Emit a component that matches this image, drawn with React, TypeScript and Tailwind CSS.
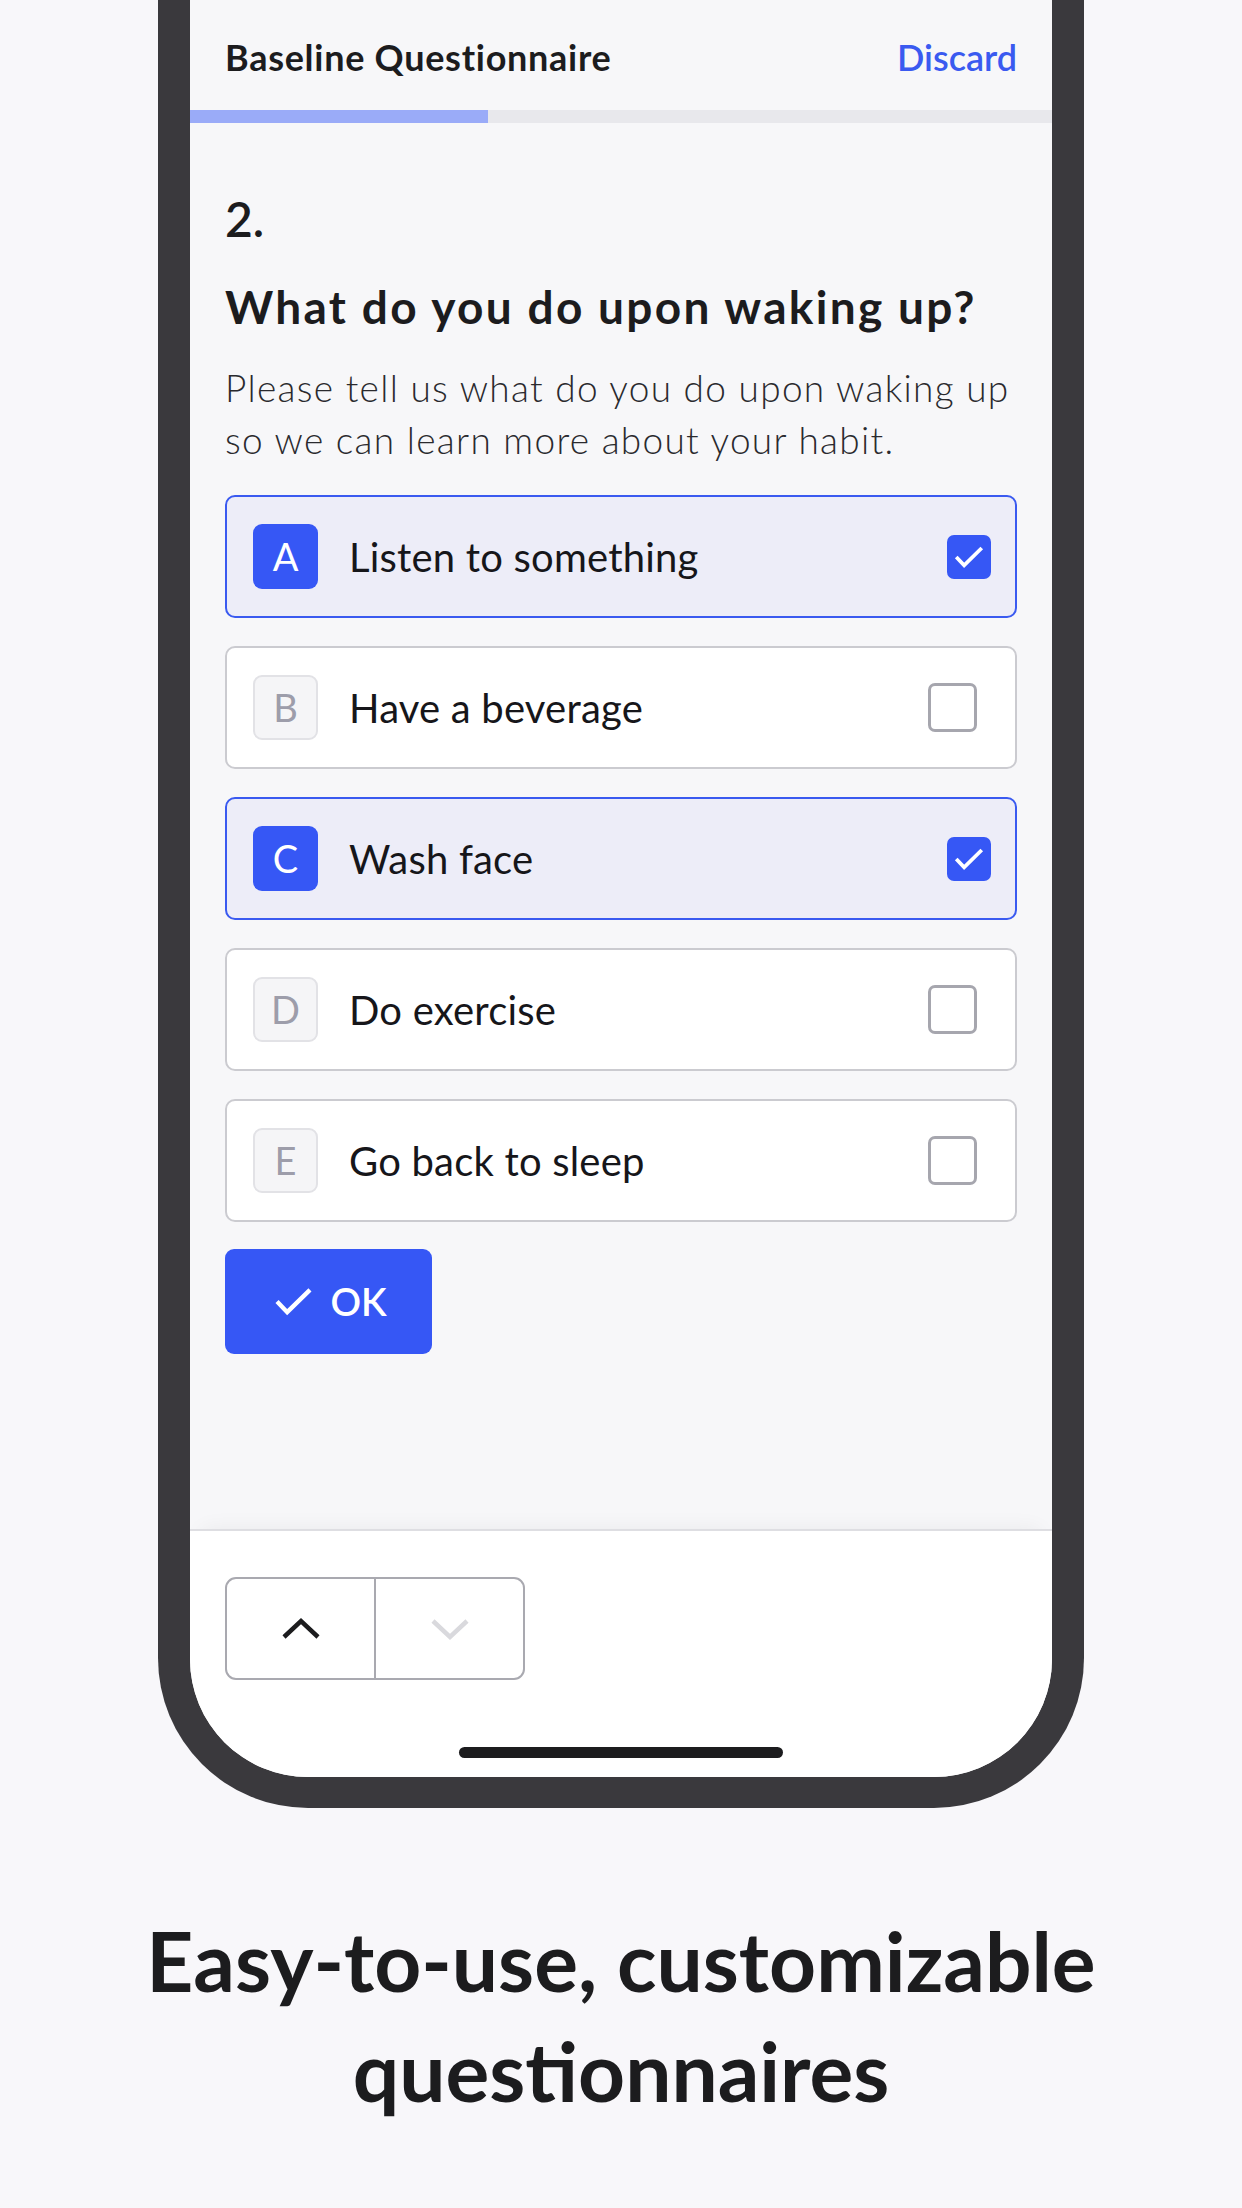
import React from "react";

const options = [
  { key: "A", label: "Listen to something", on: true },
  { key: "B", label: "Have a beverage", on: false },
  { key: "C", label: "Wash face", on: true },
  { key: "D", label: "Do exercise", on: false },
  { key: "E", label: "Go back to sleep", on: false },
];

function CheckIcon({ className, width = 4 }: { className?: string; width?: number }) {
  return (
    <svg viewBox="0 0 40 32" fill="none" stroke="currentColor" strokeWidth={width} className={className}>
      <path d="M3 16l10.5 11L37 4" />
    </svg>
  );
}

function Chevron({ up, className }: { up?: boolean; className?: string }) {
  return (
    <svg viewBox="0 0 40 24" fill="none" stroke="currentColor" strokeWidth={4.5} className={className}>
      {up ? <path d="M3 20L20 4l17 16" /> : <path d="M3 4l17 16L37 4" />}
    </svg>
  );
}

function OptionRow({ k, label, on }: { k: string; label: string; on: boolean }) {
  return (
    <div
      className={`flex h-[123px] items-center rounded-[10px] pl-[26px] pr-[24px] ${
        on ? "border-2 border-[#3a5af0] bg-[#ededf8]" : "border-2 border-[#cbcbd0] bg-white"
      }`}
    >
      <div
        className={`flex h-[65px] w-[65px] shrink-0 items-center justify-center rounded-[9px] text-[38px] ${
          on ? "bg-[#3657f5] text-white" : "border-2 border-[#e2e2e6] bg-[#f5f5f7] text-[#9d9daa]"
        }`}
      >
        {k}
      </div>
      <span className="ml-[31px] flex-1 text-[40px] tracking-[0.005em] text-[#16161a]">{label}</span>
      {on ? (
        <div className="flex h-[44px] w-[44px] items-center justify-center rounded-[7px] bg-[#3657f5] text-white">
          <CheckIcon className="h-[24px] w-[30px]" width={5} />
        </div>
      ) : (
        <div className="mr-[14px] h-[49px] w-[49px] rounded-[7px] border-[3px] border-[#a6a6ae] bg-white" />
      )}
    </div>
  );
}

export default function App() {
  return (
    <div className="flex h-[2208px] w-[1242px] flex-col items-center overflow-hidden bg-[#f8f7fa] font-['Lato',sans-serif]">
      <div className="h-[1808px] w-[926px] shrink-0 rounded-b-[150px] bg-[#3a393d] px-[32px] pb-[31px]">
        <div className="flex h-full flex-col overflow-hidden rounded-b-[118px] bg-[#f7f7f9]">
          <header className="flex h-[110px] shrink-0 items-center justify-between px-[35px] pt-[4px]">
            <span className="text-[36px] font-bold tracking-[0.02em] text-[#1c1c1e]">Baseline Questionnaire</span>
            <span className="text-[36px] font-semibold text-[#3a5af0]">Discard</span>
          </header>
          <div className="flex h-[13px] shrink-0 bg-[#e8e8ec]">
            <div className="w-[298px] bg-[#9aabf8]" />
          </div>

          <main className="flex flex-1 flex-col px-[35px] pt-[68px]">
            <p className="text-[48px] font-semibold leading-[56px] text-[#1c1c1e]">2.</p>
            <h1 className="mt-[34px] text-[46px] font-bold leading-[52px] tracking-[0.05em] text-[#1c1c1e]">
              What do you do upon waking up?
            </h1>
            <p className="mt-[29px] text-[37px] font-light leading-[52px] tracking-[0.035em] text-[#2a2a2e]">
              Please tell us what do you do upon waking up so we can learn more about your habit.
            </p>
            <div className="mt-[29px] flex flex-col gap-[28px]">
              {options.map((o) => (
                <OptionRow key={o.key} k={o.key} label={o.label} on={o.on} />
              ))}
            </div>
            <button className="mt-[27px] flex h-[105px] w-[207px] items-center justify-center gap-[17px] rounded-[9px] bg-[#3657f5] pl-[4px] text-[38px] font-semibold text-white">
              <CheckIcon className="h-[31px] w-[39px]" width={4.5} />
              OK
            </button>
          </main>

          <footer className="flex h-[248px] shrink-0 flex-col border-t-2 border-[#dedee2] bg-white px-[35px] pt-[46px] shadow-[0_-12px_20px_-12px_rgba(0,0,0,0.06)]">
            <div className="flex h-[103px] w-[300px] rounded-[11px] border-2 border-[#a9a9b0]">
              <div className="flex flex-1 items-center justify-center border-r-2 border-[#a9a9b0] text-[#1c1c1e]">
                <Chevron up className="h-[24px] w-[40px]" />
              </div>
              <div className="flex flex-1 items-center justify-center text-[#d9d9dd]">
                <Chevron className="h-[24px] w-[40px]" />
              </div>
            </div>
            <div className="mx-auto mt-[67px] h-[11px] w-[324px] rounded-full bg-[#1c1c1e]" />
          </footer>
        </div>
      </div>

      <h2 className="mt-[97px] text-center text-[82px] font-bold leading-[110px] text-[#1c1c1e]">
        Easy-to-use, customizable
        <br />
        questionnaires
      </h2>
    </div>
  );
}
